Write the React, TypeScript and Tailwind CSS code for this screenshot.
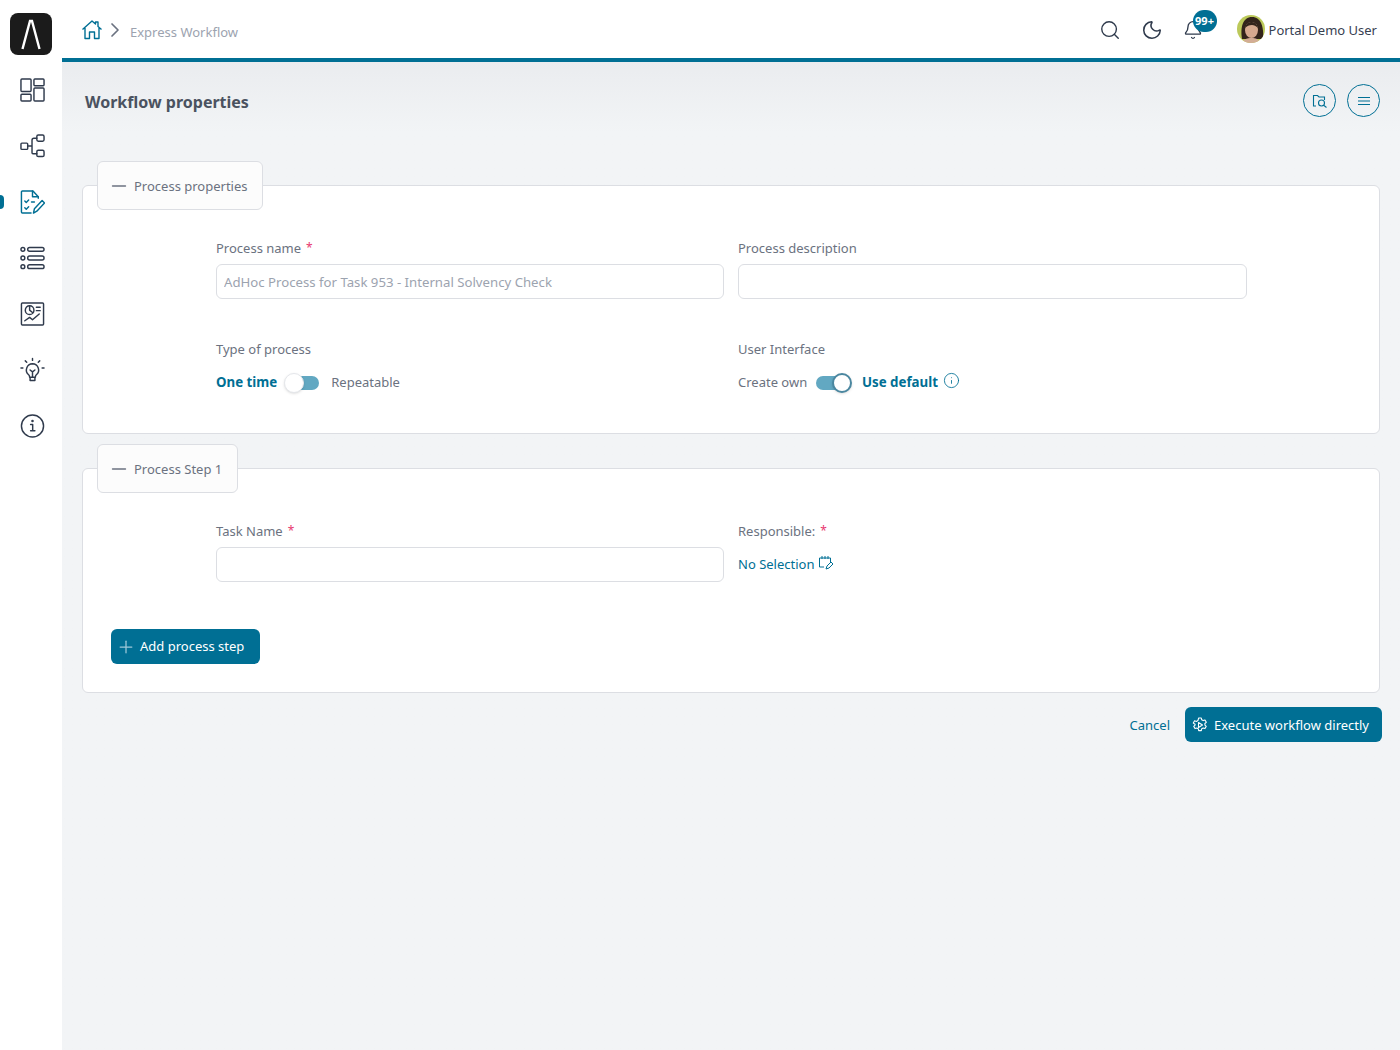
import { Minus, Plus, Search, Moon, Bell, ChevronRight, Info } from 'lucide-react';
import { ReactNode } from 'react';

const ink = '#2f3a4c';

function NavIcon({ children, active }: { children: ReactNode; active?: boolean }) {
    return (
        <div className="relative flex h-14 w-full items-center justify-center">
            {active && <span className="absolute left-0 top-[21px] h-[14px] w-1 rounded-r bg-[#006f94]" />}
            <svg
                width="25"
                height="26"
                viewBox="0 0 26 26"
                fill="none"
                stroke={active ? '#006f94' : ink}
                strokeWidth="1.5"
                strokeLinecap="round"
                strokeLinejoin="round"
                className="ml-[2px]"
            >
                {children}
            </svg>
        </div>
    );
}

function Sidebar() {
    return (
        <aside className="flex w-[62px] shrink-0 flex-col items-center bg-white pt-[13px]">
            <div className="mb-[7px] flex h-[42px] w-[42px] items-center justify-center rounded-lg bg-[#1b1b1b]">
                <svg width="26" height="32" viewBox="0 0 26 32" fill="none" stroke="#fff" strokeWidth="2.4">
                    <path d="M4.5 31 12 3h2l7.5 28" />
                </svg>
            </div>
            <NavIcon>
                <rect x="1" y="1.5" width="10.5" height="13" rx="1" />
                <rect x="1" y="17.5" width="10.5" height="7" rx="1" />
                <rect x="14.5" y="1.5" width="10.5" height="7" rx="1" />
                <rect x="14.5" y="11" width="10.5" height="13.5" rx="1" />
            </NavIcon>
            <NavIcon>
                <rect x="1" y="10" width="7" height="6.5" rx="1" />
                <rect x="17.5" y="1.5" width="7.5" height="6.5" rx="1.5" />
                <rect x="17.5" y="17.5" width="7.5" height="6.5" rx="1.5" />
                <path d="M8 13h4.5M17.5 5h-3a2 2 0 0 0-2 2v13a1 1 0 0 0 1 1h4" />
            </NavIcon>
            <NavIcon active>
                <path d="M19 9V7.5L13.500 1.500H2.500a1 1 0 0 0-1 1v21a1 1 0 0 0 1 1h9" />
                <path d="M13 1.500V7.500h6" />
                <path d="m5 12 1.500 1.500L9 11M5 19l1.500 1.500L9 18M12 13h3" />
                <path d="m14 24.500 1-4.500 8-8.500 2.500 2.500-8 8.500z" />
            </NavIcon>
            <NavIcon>
                <circle cx="3" cy="4" r="2" />
                <circle cx="3" cy="13" r="2" />
                <circle cx="3" cy="22" r="2" />
                <rect x="8" y="2" width="17" height="4" rx="2" />
                <rect x="8" y="11" width="17" height="4" rx="2" />
                <rect x="8" y="20" width="17" height="4" rx="2" />
            </NavIcon>
            <NavIcon>
                <rect x="1.500" y="1.500" width="23" height="23" rx="1" />
                <circle cx="10" cy="9" r="4.500" />
                <path d="M10 4.500V9l3 2.500M17 6h4M17 9.500h4M5 20l5-3.500 3 2.500 7-6" />
            </NavIcon>
            <NavIcon>
                <path d="M13 6.500a6.500 6.500 0 0 0-4 11.500c.8.700 1 1.500 1 2.500h6c0-1 .2-1.800 1-2.500a6.500 6.500 0 0 0-4-11.500z" />
                <path d="M10.500 21.500v2.500h5v-2.500M10.500 13l2.500 2 2.500-2M13 15v5M13 1v2M3 11H1M25 11h-2M5.500 3.500 7 5M20.500 3.500 19 5" />
            </NavIcon>
            <NavIcon>
                <circle cx="13" cy="13" r="11.500" />
                <path d="M11 11.500h2.200v6.500M11 18h4.500" />
                <circle cx="13" cy="7.800" r=".6" fill={ink} />
            </NavIcon>
        </aside>
    );
}

function Avatar() {
    return (
        <svg width="28" height="28" viewBox="0 0 28 28">
            <clipPath id="avatar-clip">
                <circle cx="14" cy="14" r="14" />
            </clipPath>
            <g clipPath="url(#avatar-clip)">
                <rect width="28" height="28" fill="#bcc95a" />
                <path d="M5 24C3 12 6 2 15 2s12 10 11 22z" fill="#33241b" />
                <ellipse cx="14.500" cy="15" rx="6.500" ry="8" fill="#d6a98e" />
                <path d="M8 13c1-5 4-6 7-6s5 2 6 6c-2-2-4-3-6-3-3 0-5 1-7 3z" fill="#33241b" />
                <path d="M5 28c2-4 5-5 9.500-5s7 1 8.500 5z" fill="#d3ad95" />
            </g>
        </svg>
    );
}

function Header() {
    return (
        <header className="flex h-[62px] shrink-0 items-center border-b-4 border-[#006f94] bg-white pl-[19px] pr-[23px]">
            <svg width="22" height="22" viewBox="0 0 22 22" fill="none" stroke="#006f94" strokeWidth="1.400" strokeLinejoin="round" className="mt-0.5">
                <path d="M1.500 10.500 11 2l3.500 3V3h2.500v4.500l3.500 3M4 9v10.500h4.500V13h5v6.500H18V9" />
            </svg>
            <ChevronRight size={24} strokeWidth={1.700} className="mt-px text-[#6b7280]" />
            <span className="ml-[3px] mt-[7px] text-[13px] text-[#9ca3af]">Express Workflow</span>
            <div className="ml-auto flex items-center pt-[2px]">
                <Search size={22} strokeWidth={1.500} color={ink} />
                <Moon size={22} strokeWidth={1.700} color={ink} className="ml-5" />
                <div className="relative ml-5">
                    <Bell size={20} strokeWidth={1.600} color={ink} />
                    <span className="absolute -right-[14px] -top-[10px] flex h-[22px] w-[24px] items-center justify-center rounded-full bg-[#006f94] text-[11px] font-bold text-white">
                        99+
                    </span>
                </div>
                <div className="-mt-[2px] ml-[34px]">
                    <Avatar />
                </div>
                <span className="ml-1 mt-px text-[13px] text-[#374151]">Portal Demo User</span>
            </div>
        </header>
    );
}

function Legend({ title, width }: { title: string; width: string }) {
    return (
        <div className={`relative z-10 -mb-[25px] ml-[15px] flex h-[49px] items-center rounded-md border border-[#dcdee3] bg-[#fcfcfc] pl-[10px] ${width}`}>
            <Minus size={22} strokeWidth={1.700} className="text-[#6b7280]" />
            <span className="ml-[4px] mt-[2px] text-[13px] text-[#6b7280]">{title}</span>
        </div>
    );
}

function Label({ text, required }: { text: string; required?: boolean }) {
    return (
        <div className="h-[28px] text-[13px] leading-[24px] text-[#6b7280]">
            {text}
            {required && <span className="relative -top-px ml-[5px] text-[12px] text-[#e8396f]">*</span>}
        </div>
    );
}

function Toggle({ on }: { on?: boolean }) {
    return (
        <span className="relative mx-[8px] inline-block h-[14px] w-[34px] rounded-full bg-[#62a8c2]">
            <span
                className={
                    on
                        ? 'absolute -top-[3px] -right-[2px] h-5 w-5 rounded-full border-2 border-[#4b87a0] bg-white shadow'
                        : 'absolute -top-[3px] -left-[1px] h-5 w-5 rounded-full border border-[#e5e7eb] bg-white shadow'
                }
            />
        </span>
    );
}

const inputClass = 'h-[35px] w-full rounded-md border border-[#dcdee3] bg-white px-[7px] text-[13.200px] outline-none';

export default function App() {
    return (
        <div
            className="flex h-[1050px] w-[1400px] overflow-hidden bg-[#f2f4f6]"
            style={{ fontFamily: '"Noto Sans", "Open Sans", sans-serif' }}
        >
            <Sidebar />
            <div className="flex min-w-0 flex-1 flex-col">
                <Header />
                <main className="flex-1 bg-gradient-to-b from-[#eaecef] to-[#f2f4f6] to-[70px] pl-5 pr-5">
                    <div className="flex h-[99px] items-start justify-between pt-[22px]">
                        <h1 className="ml-[3px] mt-[6px] text-[16px] font-bold text-[#4a5260]">Workflow properties</h1>
                        <div className="flex gap-[11px]">
                            <button className="flex h-[33px] w-[33px] items-center justify-center rounded-full border border-[#006f94] text-[#006f94]">
                                <svg width="16" height="16" viewBox="0 0 16 16" fill="none" stroke="currentColor" strokeWidth="1.100">
                                    <path d="M4 13H1.500V2.500h4l1.500 1.500h5.500v3" />
                                    <circle cx="9.500" cy="10" r="3" />
                                    <path d="m12 12.500 2.500 2" />
                                </svg>
                            </button>
                            <button className="flex h-[33px] w-[33px] items-center justify-center rounded-full border border-[#006f94] text-[#006f94]">
                                <svg width="14" height="14" viewBox="0 0 14 14" stroke="currentColor" strokeWidth="1.200">
                                    <path d="M1 3.500h12M1 7h12M1 10.500h12" />
                                </svg>
                            </button>
                        </div>
                    </div>

                    <Legend title="Process properties" width="w-[166px]" />
                    <section className="h-[249px] w-[1298px] rounded-md border border-[#dcdee3] bg-white pl-[133px] pt-[50px]">
                        <div className="grid grid-cols-[508px_509px] gap-x-[14px]">
                            <div>
                                <Label text="Process name" required />
                                <input
                                    className={`${inputClass} placeholder:text-[#9ca3af]`}
                                    placeholder="AdHoc Process for Task 953 - Internal Solvency Check"
                                    disabled
                                />
                            </div>
                            <div>
                                <Label text="Process description" />
                                <input className={inputClass} />
                            </div>
                            <div className="mt-[38px]">
                                <Label text="Type of process" />
                                <div className="mt-[8px] flex items-center text-[13px] text-[#6b7280]">
                                    <b className="text-[13.300px] text-[#006f94]">One time</b>
                                    <Toggle />
                                    <span className="ml-1">Repeatable</span>
                                </div>
                            </div>
                            <div className="mt-[38px]">
                                <Label text="User Interface" />
                                <div className="mt-[8px] flex items-center text-[13px] text-[#6b7280]">
                                    <span className="w-[70px]">Create own</span>
                                    <Toggle on />
                                    <b className="ml-[4px] text-[13.300px] text-[#006f94]">Use default</b>
                                    <Info size={17} strokeWidth={1.200} className="-mt-1 ml-[5px] text-[#006f94]" />
                                </div>
                            </div>
                        </div>
                    </section>

                    <div className="h-[10px]" />
                    <Legend title="Process Step 1" width="w-[141px]" />
                    <section className="h-[225px] w-[1298px] rounded-md border border-[#dcdee3] bg-white pl-[28px] pt-[50px]">
                        <div className="ml-[105px] grid grid-cols-[508px_509px] gap-x-[14px]">
                            <div>
                                <Label text="Task Name" required />
                                <input className={inputClass} />
                            </div>
                            <div>
                                <Label text="Responsible:" required />
                                <div className="mt-[8px] flex items-center text-[13px] text-[#006f94]">
                                    No Selection
                                    <svg width="16" height="16" viewBox="0 0 16 16" fill="none" stroke="currentColor" strokeWidth="1" className="-mt-1 ml-[4px]">
                                        <path d="M6 12H1.500V3h11v4M4 1v3M7 1v3M10 1v3" />
                                        <path d="m8 14 1-3 4-4 2 2-4 4z" />
                                    </svg>
                                </div>
                            </div>
                        </div>
                        <button className="mt-[47px] flex h-[35px] w-[149px] items-center rounded-md bg-[#006f94] pl-[5px] text-[13px] text-white">
                            <Plus size={20} strokeWidth={1.500} className="text-[#9fc9d8]" />
                            <span className="ml-[4px]">Add process step</span>
                        </button>
                    </section>

                    <div className="mt-[14px] flex w-[1300px] items-center justify-end">
                        <span className="mr-[15px] mt-[3px] text-[13px] text-[#006f94]">Cancel</span>
                        <button className="flex h-[35px] w-[197px] items-center rounded-md bg-[#006f94] pl-[7px] text-[13px] text-white">
                            <svg width="16" height="16" viewBox="0 0 16 16" fill="none" stroke="currentColor" strokeWidth="1.100" strokeLinejoin="round">
                                <path d="M6.700 1h2.600l.4 1.800 1.500.8 1.800-.6 1.300 2.300-1.400 1.200v1.600l1.400 1.200-1.300 2.300-1.800-.6-1.500.8-.4 1.800H6.700l-.4-1.800-1.500-.8-1.800.6-1.300-2.300 1.400-1.200V7.300L1.300 6.100 2.600 3.800l1.800.6 1.500-.8z" />
                                <path d="M6.500 5.500v5l4-2.500z" />
                            </svg>
                            <span className="ml-[6px] mt-[3px]">Execute workflow directly</span>
                        </button>
                    </div>
                </main>
            </div>
        </div>
    );
}
